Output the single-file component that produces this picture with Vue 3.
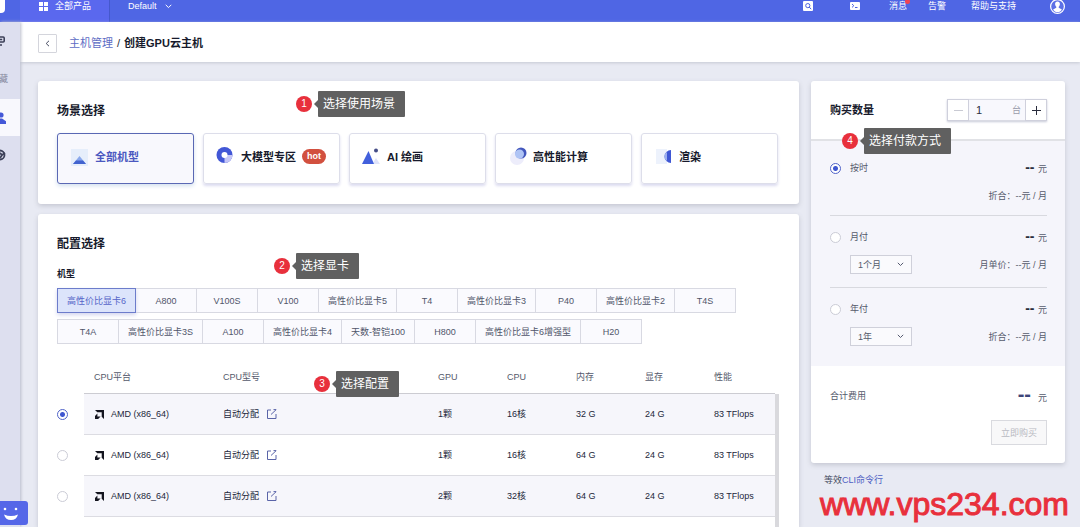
<script setup>
import { ref } from 'vue'

const scenes = [
  { id: 'all', name: '全部机型' },
  { id: 'llm', name: '大模型专区', hot: true },
  { id: 'paint', name: 'AI 绘画' },
  { id: 'hpc', name: '高性能计算' },
  { id: 'render', name: '渲染' }
]
const scene = ref('all')

const models = [
  '高性价比显卡6', 'A800', 'V100S', 'V100', '高性价比显卡5', 'T4', '高性价比显卡3', 'P40',
  '高性价比显卡2', 'T4S', 'T4A', '高性价比显卡3S', 'A100', '高性价比显卡4', '天数-智铠100',
  'H800', '高性价比显卡6增强型', 'H20'
]
const model = ref('高性价比显卡6')

const specs = [
  { gpu: '1颗', cpu: '16核', mem: '32 G', vram: '24 G', perf: '83 TFlops' },
  { gpu: '1颗', cpu: '16核', mem: '64 G', vram: '24 G', perf: '83 TFlops' },
  { gpu: '2颗', cpu: '32核', mem: '64 G', vram: '24 G', perf: '83 TFlops' }
]
const spec = ref(0)

const plans = [
  { id: 'hour', name: '按时', note: '折合：--元 / 月' },
  { id: 'month', name: '月付', term: '1个月', note: '月单价：--元 / 月' },
  { id: 'year', name: '年付', term: '1年', note: '折合：--元 / 月' }
]
const plan = ref('hour')
const quantity = ref(1)
</script>

<template>
  <div class="shell">
    <header class="topbar">
      <div class="logo"><span></span></div>
      <button class="products">
        <svg width="9" height="9" viewBox="0 0 9 9" fill="#fff"><path d="M0 0h4v4H0zM5 0h4v4H5zM0 5h4v4H0zM5 5h4v4H5z" /></svg>
        全部产品
      </button>
      <button class="region">
        Default
        <svg width="7" height="5" viewBox="0 0 7 5" fill="none" stroke="#fff"><path d="M.7.8l2.8 2.8L6.3.8" /></svg>
      </button>
      <nav class="tools">
        <a href="#" aria-label="搜索">
          <svg width="10" height="10" viewBox="0 0 10 10"><rect width="10" height="10" rx="1" fill="#fff" /><circle cx="4.8" cy="4.6" r="2.1" fill="none" stroke="#4c62df" /><path d="M6.2 6l2 2.2" stroke="#4c62df" /></svg>
        </a>
        <a href="#" aria-label="终端">
          <svg width="10" height="8" viewBox="0 0 10 8"><rect width="10" height="8" rx="1" fill="#fff" /><path d="M2 2l1.8 1.7L2 5.4M5 5.5h2.5" fill="none" stroke="#4c62df" /></svg>
        </a>
        <a href="#" class="news">消息<i></i></a>
        <a href="#">告警</a>
        <a href="#">帮助与支持</a>
        <a href="#" aria-label="账户">
          <svg width="15" height="15" viewBox="0 0 15 15"><circle cx="7.5" cy="7.5" r="6.9" fill="#5c70e6" stroke="#fff" stroke-width="1.2" /><path d="M7.5 2.5c1.6 0 2.4 1.1 2.4 2.5 0 1.2-.5 2.2-1.2 2.8v1l3.2 1.6c-.8 1.6-2.4 2.7-4.4 2.7s-3.600-1.100-4.400-2.700l3.200-1.600v-1C5.600 7.200 5.100 6.200 5.100 5c0-1.400.8-2.500 2.400-2.500z" fill="#fff" /></svg>
        </a>
      </nav>
    </header>

    <div class="body">
      <aside class="side">
        <a href="#" class="item" aria-label="控制台">
          <svg width="5" height="10" viewBox="0 0 5 10" fill="none" stroke="#3c4058" stroke-width="1.600"><path d="M0 1h3.200q1 0 1 1v3q0 1-1 1H0M0 3.500h2.200M0 9h2" /></svg>
        </a>
        <span class="item group">藏</span>
        <a href="#" class="item on" aria-label="云主机">
          <svg width="6" height="12" viewBox="0 0 6 12" fill="#4458d8"><circle cx="1" cy="3" r="2.600" /><path d="M0 6.500h2l4 2.800V12H0z" /></svg>
        </a>
        <a href="#" class="item" aria-label="网络">
          <svg width="6" height="12" viewBox="0 0 6 12" fill="none" stroke="#3c4058" stroke-width="1.800"><circle cx="0" cy="6" r="4.500" /><path d="M0 4l2 2-2 3M2 6l3-2" /></svg>
        </a>
      </aside>

      <div class="content">
        <div class="crumbs">
          <button class="back" aria-label="返回">
            <svg width="5" height="7" viewBox="0 0 5 7" fill="none" stroke="#444a60"><path d="M4 .8L1.200 3.500 4 6.200" /></svg>
          </button>
          <a href="#">主机管理</a><span class="slash">/</span><h1>创建GPU云主机</h1>
        </div>

        <main class="main">
          <div class="left">
            <section class="card">
              <h2>场景选择</h2>
              <div class="note n1"><b>1</b><span>选择使用场景</span></div>
              <div class="scenes">
                <button v-for="s in scenes" :key="s.id" class="scene" :class="{ on: scene === s.id }" :aria-pressed="scene === s.id" @click="scene = s.id">
                  <svg width="20" height="20" viewBox="0 0 20 20">
                    <g v-if="s.id === 'all'"><rect x="2" y="2" width="17" height="17" fill="#e6eefb" /><path d="M4 17l6.500-8 6.500 8z" fill="#8aa8ec" /><path d="M4 17l3-3.500h7L17 17z" fill="#4263cf" /></g>
                    <g v-else-if="s.id === 'llm'"><circle cx="9.500" cy="8" r="8" fill="#4257d6" /><path d="M9.500 8h8a8 8 0 0 1-8 8z" fill="#c5c6f7" /><circle cx="9.500" cy="8" r="3" fill="#fff" /></g>
                    <g v-else-if="s.id === 'paint'"><path d="M11 17l4-6 4 6z" fill="#dfe3fa" /><path d="M1 17L7.500 4 13 17z" fill="#4260dc" /><circle cx="15" cy="3.500" r="2" fill="#454d86" /></g>
                    <g v-else-if="s.id === 'hpc'"><circle cx="10" cy="11" r="7" fill="#ededfb" /><circle cx="14" cy="6" r="5.500" fill="#4357bd" /><circle cx="12.500" cy="7" r="4.500" fill="#afc4f5" /></g>
                    <g v-else><rect x="3" y="2" width="11" height="15" fill="#edf2fc" /><path d="M18 3v13a6.500 6.500 0 0 1 0-13z" fill="#3f57d4" /><path d="M14 5a5 5 0 0 0 0 9z" fill="#9cafee" /></g>
                  </svg>
                  <span>{{ s.name }}</span>
                  <em v-if="s.hot">hot</em>
                </button>
              </div>
            </section>

            <section class="card grow">
              <h2>配置选择</h2>
              <div class="note n2"><b>2</b><span>选择显卡</span></div>
              <h3>机型</h3>
              <div class="models">
                <button v-for="m in models" :key="m" :class="{ on: model === m }" :aria-pressed="model === m" @click="model = m">{{ m }}</button>
              </div>
              <div class="note n3"><b>3</b><span>选择配置</span></div>
              <div class="tablewrap">
                <table>
                  <colgroup>
                    <col class="c-radio" /><col class="c-plat" /><col /><col class="c-num" /><col class="c-num" /><col class="c-num" /><col class="c-num" /><col class="c-perf" />
                  </colgroup>
                  <thead>
                    <tr><td></td><th>CPU平台</th><th>CPU型号</th><th>GPU</th><th>CPU</th><th>内存</th><th>显存</th><th>性能</th></tr>
                  </thead>
                  <tbody>
                    <tr v-for="(r, i) in specs" :key="i">
                      <td class="pick"><input v-model="spec" type="radio" name="spec" :value="i" :aria-label="`AMD ${r.cpu} ${r.mem}`" /></td>
                      <td>
                        <span class="plat">
                          <svg width="9" height="9" viewBox="0 0 9 9" fill="#14151f"><path d="M0 0h9v9L6.700 6.700V2.300H2.300z" /><path d="M2.400 3.400L0 5.900V9h3.100l2.500-2.500H2.400z" /></svg>
                          AMD (x86_64)
                        </span>
                      </td>
                      <td>
                        <span class="auto">自动分配
                          <button aria-label="修改CPU型号"><svg width="10" height="10" viewBox="0 0 10 10" fill="none" stroke="#5a64a8"><path d="M4 1H.5v8.500H9V5M4 5.500L9 .8M6.500 .6h2.800" /></svg></button>
                        </span>
                      </td>
                      <td>{{ r.gpu }}</td><td>{{ r.cpu }}</td><td>{{ r.mem }}</td><td>{{ r.vram }}</td><td>{{ r.perf }}</td>
                    </tr>
                  </tbody>
                </table>
              </div>
            </section>
          </div>

          <div class="right">
            <section class="order">
              <div class="qty">
                <label for="qty">购买数量</label>
                <div class="stepper">
                  <button disabled aria-label="减少"><svg width="9" height="9" viewBox="0 0 9 9" stroke="#c9cad3"><path d="M0 4.500h9" /></svg></button>
                  <div class="field"><input id="qty" v-model="quantity" type="text" /><span>台</span></div>
                  <button aria-label="增加" @click="quantity++"><svg width="9" height="9" viewBox="0 0 9 9" stroke="#2a2d3d"><path d="M0 4.500h9M4.500 0v9" /></svg></button>
                </div>
              </div>
              <div class="note n4"><b>4</b><span>选择付款方式</span></div>
              <div class="plans">
                <div v-for="p in plans" :key="p.id" class="plan">
                  <div class="line">
                    <label><input v-model="plan" type="radio" name="plan" :value="p.id" />{{ p.name }}</label>
                    <span><strong>--</strong> 元</span>
                  </div>
                  <div class="line sub">
                    <div v-if="p.term" class="pickterm">
                      <select :aria-label="p.name + '时长'"><option>{{ p.term }}</option></select>
                      <svg width="7" height="5" viewBox="0 0 7 5" fill="none" stroke="#555a70"><path d="M.8.8l2.700 2.700L6.200.8" /></svg>
                    </div>
                    <span class="price">{{ p.note }}</span>
                  </div>
                </div>
              </div>
              <div class="total">
                <div class="line"><span>合计费用</span><span class="sum"><strong>--</strong>元</span></div>
                <button disabled>立即购买</button>
              </div>
            </section>
            <p class="cli">等效<a href="#">CLI命令行</a></p>
          </div>
        </main>
      </div>
    </div>

    <button class="helper" aria-label="在线客服">
      <svg width="28" height="24" viewBox="0 0 28 24"><circle cx="5" cy="8" r="1.300" fill="#fff" /><circle cx="16" cy="8" r="1.300" fill="#fff" /><path d="M4 13.500q7 3 14 0-1.500 5.500-7 5.500t-7-5.500z" fill="#fff" /></svg>
    </button>
    <div class="watermark">www.vps234.com</div>
  </div>
</template>

<style>
body { margin: 0; overflow: hidden; }
</style>

<style scoped>
.shell, .shell * { box-sizing: border-box; }
.shell {
  height: 100vh; display: flex; flex-direction: column; position: relative; overflow: hidden;
  font: 9px/14px "Liberation Sans", "Noto Sans CJK SC", sans-serif; color: #2a2d3d; background: #e8eaf3;
}
button, input, select { font: inherit; color: inherit; margin: 0; padding: 0; border: 0; background: none; }
a { color: inherit; text-decoration: none; }
h1, h2, h3, p { margin: 0; }
svg { display: block; flex: none; }

.topbar { height: 22px; flex: none; display: flex; color: #fff; background: #4f66e4; line-height: 12px; }
.topbar > * { padding-bottom: 10px; }
.logo { width: 20px; }
.logo span { display: block; width: 5px; height: 13px; background: #fff; border-radius: 0 0 4px 0; }
.products { width: 90px; display: flex; align-items: center; gap: 7px; padding-left: 19px; background: #5a68ee; border-right: 1px solid #4558cd; }
.region { display: flex; align-items: center; gap: 8px; padding-left: 18px; }
.tools { margin-left: auto; display: flex; align-items: center; padding-right: 15px; }
.tools a + a { margin-left: 37px; }
.tools .news { position: relative; margin-left: 29px; }
.tools .news i { position: absolute; right: -3px; top: -1px; width: 5px; height: 5px; border-radius: 50%; background: #f04452; }
.tools .news + a { margin-left: 21px; }
.tools .news + a + a { margin-left: 25px; }
.tools a:last-child { margin-left: 34px; }

.body { flex: 1; display: flex; min-height: 0; }
.side { width: 20px; flex: none; background: #dddfef; box-shadow: 1px 0 3px #b9bccb; z-index: 1; }
.item { height: 37px; display: flex; align-items: center; }
.item.group { height: 40px; justify-content: flex-end; padding-right: 12px; color: #85889c; }
.item.on { background: #f8f8fd; }
.content { flex: 1; min-width: 0; display: flex; flex-direction: column; }
.crumbs { height: 40px; flex: none; display: flex; align-items: center; padding: 2px 18px 0; background: #fff; font-size: 11px; box-shadow: 0 1px 3px #c6c9d2; }
.crumbs a { color: #5d6cc4; margin-left: 12px; }
.crumbs h1 { font-size: 11px; color: #171a2c; }
.slash { margin: 0 4px; }
.back { width: 19px; height: 19px; display: grid; place-items: center; border: 1px solid #d4d5dc; border-radius: 1px; }

.main { flex: 1; min-height: 0; display: flex; gap: 12px; padding: 19px 15px 0 18px; }
.left { flex: 1; min-width: 0; display: flex; flex-direction: column; gap: 10px; }
.right { width: 254px; flex: none; }
.card { position: relative; background: #fff; padding: 21px 21px 20px 19px; border-radius: 3px; box-shadow: 0 2px 5px #c5c7d2; }
.grow { flex: 1; padding-bottom: 0; border-radius: 3px 3px 0 0; }
h2 { font-size: 12px; line-height: 18px; color: #171a2c; }
h3 { font-size: 9px; line-height: 14px; margin: 14px 0 7px; color: #171a2c; }

.scenes { margin-top: 13px; display: grid; grid-template-columns: repeat(5, 1fr); gap: 9px; }
.scene { height: 51px; display: flex; align-items: center; padding: 0 0 4px 11px; border: 1px solid #dddeea; border-radius: 3px; font-size: 11px; font-weight: bold; color: #171a2c; box-shadow: 0 2px 3px #dcdcf0; }
.scene span { margin-left: 6px; }
.scene.on { border-color: #5a68b4; background: #f8f8fd; color: #4b58c0; box-shadow: 0 2px 4px #d3e0ef; }
.scene em { margin-left: 6px; padding: 0 5px; height: 15px; line-height: 14px; border-radius: 8px; background: #d2503f; color: #fff; font-size: 9px; font-style: normal; }

.models { display: flex; flex-wrap: wrap; row-gap: 6px; padding-left: 1px; }
.models button { height: 25px; min-width: 62px; margin-left: -1px; padding: 0 9px; border: 1px solid #d8d9e2; background: #fafafe; color: #50556a; }
.models .on { position: relative; border-color: #6c7ccb; background: #dce4fb; color: #5665c8; box-shadow: 0 2px 4px #d3d6ee; }

.tablewrap { position: relative; margin-top: 16px; padding-right: 3px; }
.tablewrap::after { content: ""; position: absolute; right: -1px; top: 34px; bottom: -11px; width: 4px; background: #d9d9dd; }
table { width: 100%; table-layout: fixed; border-collapse: separate; border-spacing: 0; }
.c-radio { width: 27px; }
.c-plat { width: 129px; }
.c-num { width: 69px; }
.c-perf { width: 71px; }
th, td { height: 34px; padding: 0 0 0 10px; text-align: left; font-weight: normal; white-space: nowrap; }
th { color: #555a6c; border-bottom: 1px solid #ccccd2; }
thead td { padding: 0; }
tbody td { height: 41px; border-bottom: 1px solid #dcdce2; color: #23263a; }
tbody tr:nth-child(odd) td { background: #f6f6fb; }
tbody tr td.pick, tbody tr:nth-child(odd) td.pick { padding: 0; background: none; border-bottom: 0; }
.plat, .auto { display: flex; align-items: center; }
.plat { gap: 7px; padding-left: 1px; }
.auto { gap: 8px; }
input[type="radio"] { appearance: none; display: block; flex: none; width: 11px; height: 11px; border: 1px solid #cbccd6; border-radius: 50%; background: #fff; }
input[type="radio"]:checked { border-color: #5063c8; background: radial-gradient(circle, #3f57d0 0 2px, #fff 3px); }

.order { position: relative; background: #fff; border-radius: 3px; box-shadow: 0 2px 5px #c5c7d2; }
.qty { height: 60px; display: flex; align-items: center; justify-content: space-between; padding: 0 18px 0 19px; border-bottom: 2px solid #e1e2e6; }
.qty label { font-size: 11px; font-weight: bold; color: #171a2c; }
.stepper { display: flex; width: 100px; height: 22px; box-shadow: 0 1px 2px #c8cad8; }
.stepper button { width: 22px; display: grid; place-items: center; border: 1px solid #cfd0dc; background: #fff; }
.field { flex: 1; min-width: 0; display: flex; align-items: center; padding: 0 4px 0 7px; background: #f8f8fd; border: solid #dadbe4; border-width: 1px 0; color: #9a9cab; }
.field input { flex: 1; min-width: 0; font-size: 11px; color: #2a2d3d; }
.plans { background: #f5f5fb; padding: 0 18px 0 19px; height: 225px; color: #555a6c; }
.plan { height: 72px; padding-top: 13px; }
.plan:first-child { height: 74px; padding-top: 19px; }
.plan + .plan { border-top: 1px solid #d8d9df; }
.line { display: flex; align-items: center; justify-content: space-between; height: 16px; }
.line label { display: flex; align-items: center; gap: 9px; }
.line strong { font-size: 14px; color: #2a2d3d; margin-right: 1px; }
.sub { height: 19px; margin-top: 10px; }
.price { margin-left: auto; }
.pickterm { position: relative; margin-left: 20px; }
.pickterm select { appearance: none; display: block; width: 62px; height: 19px; padding-left: 7px; border: 1px solid #cfd0da; background: #fafafd; }
.pickterm svg { position: absolute; right: 8px; top: 7px; pointer-events: none; }
.total { padding: 22px 18px 18px 19px; color: #555a6c; }
.total .sum strong { font-size: 20px; color: #3d4678; margin-right: 7px; }
.total button { display: block; margin: 16px 0 0 auto; width: 56px; height: 25px; border: 1px solid #d9dadf; background: #f8f8f9; color: #b9bac2; }
.cli { margin: 10px 0 0 13px; color: #444a60; }
.cli a { color: #4f5fc4; }

.note { position: absolute; z-index: 2; display: flex; align-items: center; gap: 6px; color: #fff; }
.note b { width: 16px; height: 16px; border-radius: 50%; background: #e8303c; font-size: 10px; line-height: 16px; font-weight: normal; text-align: center; }
.note span { position: relative; height: 26px; padding: 0 10px 0 5px; line-height: 26px; font-size: 12px; background: #606060; border-radius: 1px; }
.note span::before { content: ""; position: absolute; left: -4px; top: 9px; border: solid transparent; border-width: 4px 4px 4px 0; border-right-color: #606060; }
.n1 { left: 258px; top: 10px; }
.n2 { left: 236px; top: 39px; }
.n3 { left: 276px; top: 157px; }
.n4 { left: 31px; top: 47px; }

.helper { position: absolute; z-index: 3; left: 0; bottom: 2px; border-radius: 0 3px 3px 0; background: #5567e8; }
.watermark { position: absolute; right: 11px; bottom: 5px; font-size: 32px; line-height: 36px; color: #e8303c; -webkit-text-stroke: 1px #e8303c; }
</style>
